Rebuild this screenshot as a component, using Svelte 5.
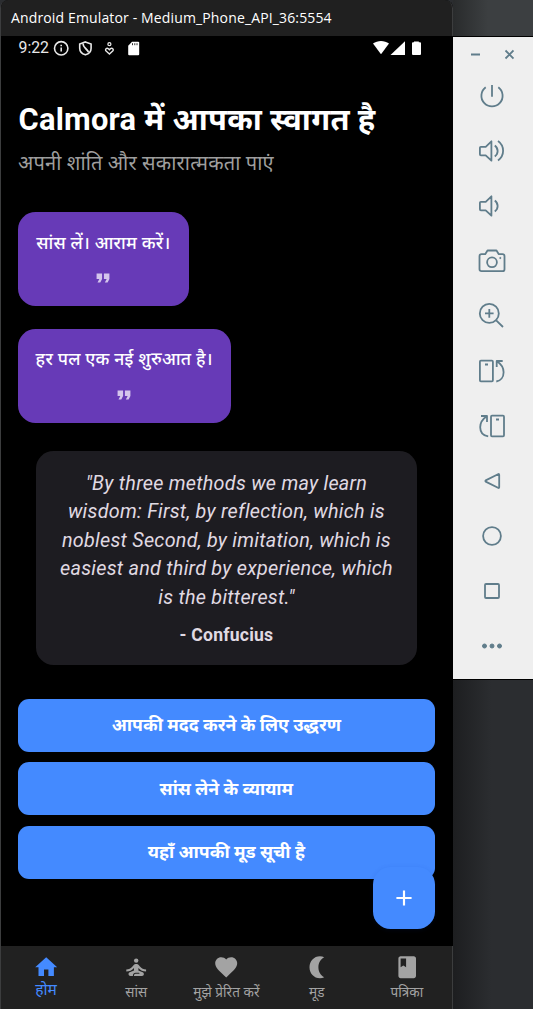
<script>
  const affirmations = ['सांस लें। आराम करें।', 'हर पल एक नई शुरुआत है।'];
  const quote = [
    '"By three methods we may learn',
    'wisdom: First, by reflection, which is',
    'noblest Second, by imitation, which is',
    'easiest and third by experience, which',
    'is the bitterest."'
  ];
  const actions = ['आपकी मदद करने के लिए उद्धरण', 'सांस लेने के व्यायाम', 'यहाँ आपकी मूड सूची है'];
  const tabs = [
    { label: 'होम', icon: 'home', active: true },
    { label: 'सांस', icon: 'breathe' },
    { label: 'मुझे प्रेरित करें', icon: 'heart' },
    { label: 'मूड', icon: 'moon' },
    { label: 'पत्रिका', icon: 'book' }
  ];
  const paths = {
    home: 'M10 20v-6h4v6h5v-8h3L12 3 2 12h3v8z',
    heart: 'M12 21.35l-1.45-1.32C5.4 15.36 2 12.28 2 8.5 2 5.42 4.42 3 7.5 3c1.74 0 3.41.81 4.5 2.09C13.09 3.81 14.76 3 16.5 3 19.58 3 22 5.42 22 8.5c0 3.78-3.4 6.86-8.55 11.54L12 21.35z',
    moon: 'M14.500 2c1.400 0 2.700.300 3.900.900-3.200 1.700-5.300 5-5.300 9.100s2.100 7.400 5.300 9.100C17.200 21.700 15.900 22 14.500 22 9 22 5 17.520 5 12S9 2 14.500 2z',
    book: 'M18 2H6c-1.1 0-2 .9-2 2v16c0 1.1.9 2 2 2h12c1.1 0 2-.9 2-2V4c0-1.1-.9-2-2-2zM6 4h5v8l-2.5-1.5L6 12V4z'
  };
</script>

<div class="desktop">
  <section class="window">
    <header class="titlebar">Android Emulator - Medium_Phone_API_36:5554</header>

    <div class="screen">
      <div class="status">
        <span class="time">9:22</span>
        <svg class="left-icons" width="84" height="18" viewBox="52 39 84 18">
          <g fill="none" stroke="#e8e8e8" stroke-width="1.6">
            <circle cx="61.200" cy="48.300" r="6.700" />
            <path d="M61.200 47.500v4M61.200 44.800v1.500" />
            <path d="M85.400 41.900l5.700 2.100v4.200c0 3.100-2.300 5.600-5.700 6.600-3.400-1-5.700-3.500-5.700-6.600V44z" />
            <path d="M83 43.500c0 4.500 3.500 4.500 5.500 8.500" stroke-width="1.700" />
            <circle cx="109.400" cy="44.200" r="1.500" stroke-width="1.300" />
            <path d="M109.400 54l-3.300-3c-1.600-1.600.700-3.700 2.300-2.200l1 1 1-1c1.600-1.500 3.900.600 2.300 2.200z" stroke-width="1.400" />
          </g>
        </svg>
        <svg class="sd" width="12" height="15" viewBox="0 0 12 15">
          <path d="M4 .7h6.200q1 0 1 1v11.500q0 1-1 1H1.200q-1 0-1-1V4.700z" fill="#fff" />
          <path d="M4.500 2.200v2M6.800 2.200v2M9 2.200v2" stroke="#333" />
        </svg>
        <svg class="right-icons" width="52" height="18" viewBox="371 39 52 18" fill="#fff">
          <path d="M373 43.600C377.500 40 384.500 40 389 43.600L381 54.300z" />
          <path d="M405 41.300V55h-14.500z" />
          <path d="M414 42.200v-.800h4.800v.800h1.200q1 0 1 1v10.800q0 1-1 1h-7q-1 0-1-1V43.200q0-1 1-1z" />
        </svg>
      </div>

      <main>
        <h1>Calmora में आपका स्वागत है</h1>
        <p class="sub">अपनी शांति और सकारात्मकता पाएं</p>

        <div class="affirmations">
          {#each affirmations as text, i}
            <div class="affirm a{i}">
              <span>{text}</span>
              <svg width="22" height="22" viewBox="0 0 24 24"><path d="M6 17h3l2-4V7H5v6h3zm8 0h3l2-4V7h-6v6h3z" fill="#d4c5ec" /></svg>
            </div>
          {/each}
        </div>

        <blockquote>
          {#each quote as line}<div>{line}</div>{/each}
          <footer>- Confucius</footer>
        </blockquote>

        <div class="actions">
          {#each actions as label, i}
            <button class="b{i}">{label}</button>
          {/each}
        </div>
        <button class="fab" aria-label="+">
          <svg width="26" height="26" viewBox="0 0 24 24"><path d="M19 13h-6v6h-2v-6H5v-2h6V5h2v6h6z" fill="#fff" /></svg>
        </button>
      </main>

      <nav>
        {#each tabs as tab, i}
          <div class="tab t{i}" class:active={tab.active}>
            <svg width="26.400" height="26.400" viewBox="0 0 24 24" fill="currentColor">
              {#if tab.icon === 'breathe'}
                <circle cx="12" cy="6" r="2" />
                <path d="M21 16v-2c-2.240 0-4.160-.960-5.600-2.680l-1.340-1.600C13.680 9.260 13.120 9 12.530 9h-1.050c-.600 0-1.150.260-1.530.720l-1.340 1.600C7.160 13.040 5.240 14 3 14v2c2.770 0 5.190-1.170 7-3.250V15l-3.880 1.550c-.670.270-1.120.930-1.120 1.660C5 19.200 5.800 20 6.790 20H9v-.500c0-1.380 1.120-2.500 2.500-2.500h3c.280 0 .500.220.500.500s-.220.500-.500.500h-3c-.830 0-1.500.670-1.500 1.500v.500h7.210c.990 0 1.790-.800 1.790-1.790 0-.730-.450-1.390-1.120-1.660L14 15v-2.250c1.810 2.080 4.230 3.250 7 3.250z" />
              {:else}
                <path d={paths[tab.icon]} />
              {/if}
            </svg>
            <span>{tab.label}</span>
          </div>
        {/each}
      </nav>
    </div>
  </section>

  <aside>
    <div class="strip"></div>
    <div class="tools">
      <div class="controls">
        <svg width="44" height="12" viewBox="0 0 44 12"><path d="M1 6.500h9M35.500 2.500l8 8M43.500 2.500l-8 8" /></svg>
      </div>
      <div class="icons">
        <svg viewBox="0 0 32 32"><path d="M9.700 7.300a10.600 10.600 0 1 0 12.600 0M16 5v11.700" /></svg>
        <svg viewBox="0 0 32 32"><path d="M4.900 11.800H9.700L15.400 6.300V25.700L9.700 20.300H4.900q-1 0-1-1v-6.500q0-1 1-1zM18.800 10.500c3.800 3 3.800 8 0 11M22 6c6.800 5 6.800 14.500 0 19.500" /></svg>
        <svg viewBox="0 0 32 32"><path d="M4.900 11.800H9.700L15.400 6.300V25.700L9.700 20.300H4.900q-1 0-1-1v-6.500q0-1 1-1zM18.800 10.500c3.800 3 3.800 8 0 11" /></svg>
        <svg viewBox="0 0 32 32"><path d="M5.500 9.200h3.700l2.300-3.700h9l2.300 3.700h3.700q2 0 2 2v13q0 2-2 2h-21q-2 0-2-2v-13q0-2 2-2z" /><circle cx="16" cy="17.300" r="4.900" /><circle cx="24.300" cy="13" r=".6" class="solid" /></svg>
        <svg viewBox="0 0 32 32"><circle cx="13.300" cy="13.400" r="9.500" /><path d="M20.200 20.300l6.800 6.700M9 13.400h8.600M13.300 9.100v8.600" /></svg>
        <svg viewBox="0 0 32 32"><rect x="3.900" y="5.700" width="13" height="20.600" rx="1" /><path d="M9 9.500h3M26.700 6h-6v6M20.900 6.200c3.500 2.300 6.700 6 6.700 11s-3 8.600-7.300 9.300" /></svg>
        <svg viewBox="0 0 32 32"><rect x="15" y="5.700" width="13" height="20.600" rx="1" /><path d="M20 9.500h3M5 6h6v6M10.800 6.200c-3.500 2.300-6.600 6-6.600 11s3 8.400 8 9.200" /></svg>
        <svg viewBox="0 0 32 32"><path d="M9.700 15.400L22.500 9q.700 0 .700.700v12.600q0 .700-.700.700L9.700 16.600q-.600-.600 0-1.200z" /></svg>
        <svg viewBox="0 0 32 32"><circle cx="16" cy="16" r="8.900" /></svg>
        <svg viewBox="0 0 32 32"><rect x="9" y="9" width="14" height="14" rx="1" /></svg>
        <svg viewBox="0 0 32 32" class="solid"><circle cx="8.500" cy="16" r="2" /><circle cx="16" cy="16" r="2" /><circle cx="23.500" cy="16" r="2" /></svg>
      </div>
    </div>
    <div class="below"></div>
  </aside>
</div>

<style>
  :global(body) { margin: 0; background: #2b2d30; }
  * { box-sizing: border-box; }
  svg { display: block; flex: none; }
  .desktop {
    display: flex; width: 533px; height: 1009px; overflow: hidden; background: #2b2d30;
    font-family: Roboto, 'Noto Sans', sans-serif;
  }
  .window {
    width: 453px; height: 1009px; display: flex; flex-direction: column;
    border-left: 1px solid #3c3d3e; border-radius: 8px 8px 0 0; overflow: hidden; background: #000;
  }
  .titlebar {
    height: 36px; flex: none; padding-left: 10px; background: #202020; color: #fff;
    border-right: 1px solid #3c3d3e; border-radius: 0 8px 0 0;
    font: 14px/36px 'Open Sans', sans-serif; letter-spacing: .14px; white-space: nowrap;
  }
  .screen { flex: 1; display: flex; flex-direction: column; background: #000; }
  .status { height: 24px; display: flex; align-items: flex-start; padding-left: 17.500px; }
  .time { width: 33.500px; font-size: 15.800px; line-height: 24px; color: #e8e8e8; }
  .left-icons { margin: 3px -8px 0 0; }
  .sd { margin-top: 5px; }
  .right-icons { margin: 3px 30px 0 auto; }
  main { flex: 1; position: relative; padding: 39px 18.300px 0 17px; }
  h1 { margin: 0; padding-left: .5px; font-size: 30.800px; line-height: 41px; font-weight: 700; letter-spacing: .25px; color: #fff; white-space: nowrap; }
  .sub { margin: 9px 0 0; font-size: 20px; line-height: 28px; letter-spacing: .23px; color: #9e9e9e; white-space: nowrap; }
  .affirmations { display: flex; flex-direction: column; align-items: flex-start; gap: 22.500px; margin-top: 35.300px; }
  .affirm {
    width: 170.700px; height: 94.200px; border-radius: 17.600px; background: #673ab7; color: #fff;
    display: flex; flex-direction: column; align-items: center; padding-top: 16.500px;
    font-size: 17.600px; line-height: 28px; font-weight: 500; letter-spacing: .26px; white-space: nowrap;
  }
  .affirm.a1 { width: 212.500px; }
  .affirm svg { margin-top: 10.500px; }
  blockquote {
    margin: 28.300px 17.800px 0 18px; height: 213.500px; border-radius: 17.600px; background: #1d1c21;
    color: #e0dae3; padding-top: 18.500px; text-align: center; white-space: nowrap;
    font-size: 19.800px; line-height: 28.500px; font-style: italic; letter-spacing: .26px;
  }
  footer { margin-top: 11px; font-size: 17.600px; line-height: 24px; font-weight: 700; font-style: normal; letter-spacing: .2px; }
  .actions { display: flex; flex-direction: column; gap: 10.800px; margin-top: 34px; }
  button { border: 0; padding: 0; background: #448aff; color: #fff; font-family: inherit; }
  .actions button { height: 52.700px; border-radius: 11px; font-size: 17.700px; line-height: 28px; font-weight: 700; }
  .fab {
    position: absolute; right: 18.300px; bottom: 17.500px; width: 61.600px; height: 61.600px;
    border-radius: 17.600px; display: flex; align-items: center; justify-content: center;
    box-shadow: 0 1px 5px rgba(20, 60, 160, .12);
  }
  nav { height: 63px; background: #212121; display: flex; border-right: 1px solid #3c3d3e; }
  .tab {
    flex: 1; color: #a3a3a3; display: flex; flex-direction: column; align-items: center;
    padding-top: 8px; font-size: 13.500px; line-height: 20px; letter-spacing: .12px; white-space: nowrap;
  }
  .tab span { padding-top: 2px; }
  .tab.active span { padding-top: 0; }
  .tab.active { color: #448aff; font-size: 15.600px; }
  aside { width: 80px; display: flex; flex-direction: column; }
  .strip { height: 37px; border-bottom: 1px solid #000; background: linear-gradient(90deg, #292b2c, #3c3f41 35px); }
  .tools { height: 642px; background: #efefef; }
  .controls { height: 43px; padding: 11px 0 0 16.700px; }
  .icons { display: flex; flex-direction: column; align-items: center; gap: 23px; padding-right: 2px; }
  .icons svg { width: 32px; height: 32px; }
  .tools svg { fill: none; stroke: #607d8b; stroke-width: 1.800; stroke-linejoin: round; }
  .tools .solid { fill: #607d8b; stroke-width: 1; }
  .below { flex: 1; border-top: 1px solid #000; background: linear-gradient(90deg, #1d1e20, #2b2d30 38px); }
</style>
